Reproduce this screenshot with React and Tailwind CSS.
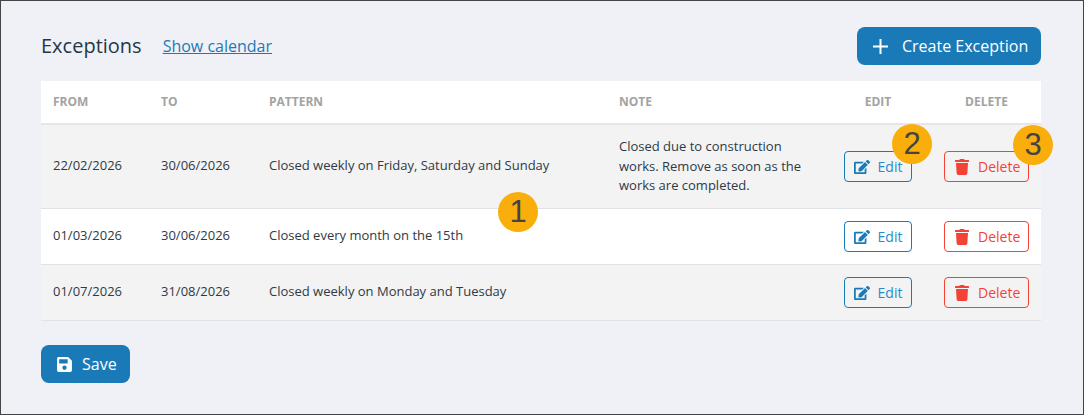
import React from 'react';
import { FaEdit, FaTrash, FaSave } from 'react-icons/fa';

const rows = [
  { from: '22/02/2026', to: '30/06/2026', pattern: 'Closed weekly on Friday, Saturday and Sunday', note: 'Closed due to construction works. Remove as soon as the works are completed.', height: 'h-[84px]', bg: 'bg-[#f3f3f4]' },
  { from: '01/03/2026', to: '30/06/2026', pattern: 'Closed every month on the 15th', note: '', height: 'h-[56px]', bg: 'bg-white' },
  { from: '01/07/2026', to: '31/08/2026', pattern: 'Closed weekly on Monday and Tuesday', note: '', height: 'h-[56px]', bg: 'bg-[#f3f3f4]' },
];

const cell = 'px-3 border-b border-[#e1e2e6] align-middle';
const textCell = `${cell} pb-[2px]`;
const head = 'px-3 text-xs font-bold uppercase text-[#a3a3a3] border-b-2 border-[#e6e6e8]';

const Badge = ({ n, className }) => (
  <div className={`absolute w-10 h-10 rounded-full bg-[#f9ae0b] flex items-center justify-center text-[#444444] text-[31px] font-['Liberation_Sans',sans-serif] ${className}`}>
    {n}
  </div>
);

const App = () => {
  return (
    <div className="relative w-[1084px] h-[415px] border border-[#444444] bg-[#f0f1f6] pl-10 pr-[42px] pt-[26px] font-['Open_Sans',sans-serif] text-[#2d3a45]">
      <div className="flex items-center justify-between h-[38px]">
        <div className="flex items-center gap-[21px]">
          <h1 className="text-xl text-[#263644]">Exceptions</h1>
          <a className="text-base text-[#1a7ab8] underline">Show calendar</a>
        </div>
        <button className="flex items-center pl-4 gap-[14px] w-[184px] h-[38px] rounded-lg bg-[#1a7ab8] text-white text-base">
          <svg viewBox="0 0 15 15" className="w-[15px] h-[15px]" fill="currentColor">
            <path d="M6.5 0h2v6.5H15v2H8.5V15h-2V8.5H0v-2h6.5z" />
          </svg>
          Create Exception
        </button>
      </div>

      <table className="mt-4 w-[1000px] table-fixed border-separate border-spacing-0 text-[13px]">
        <colgroup>
          <col className="w-[108px]" />
          <col className="w-[108px]" />
          <col className="w-[350px]" />
          <col className="w-[225px]" />
          <col className="w-[100px]" />
          <col className="w-[109px]" />
        </colgroup>
        <thead>
          <tr className="h-[44px] bg-white text-left">
            <th className={head}>From</th>
            <th className={head}>To</th>
            <th className={head}>Pattern</th>
            <th className={head}>Note</th>
            <th className={`${head} text-center !pr-5`}>Edit</th>
            <th className={`${head} text-center`}>Delete</th>
          </tr>
        </thead>
        <tbody>
          {rows.map((row) => (
            <tr key={row.from} className={`${row.height} ${row.bg}`}>
              <td className={textCell}>{row.from}</td>
              <td className={textCell}>{row.to}</td>
              <td className={textCell}>{row.pattern}</td>
              <td className={`${cell} leading-[19.5px]`}>{row.note}</td>
              <td className={`${cell} !pr-5`}>
                <button className="flex items-center justify-center gap-2 w-[68px] h-[31px] rounded border border-[#1a7ab8] text-[#2a8ac6] text-sm">
                  <FaEdit className="w-4 h-4 text-[#1a7ab8]" />
                  Edit
                </button>
              </td>
              <td className={cell}>
                <button className="flex items-center pl-[10px] gap-[9px] w-[85px] h-[31px] rounded border border-[#f44336] text-[#f44336] text-sm">
                  <FaTrash className="w-[14px] h-4" />
                  Delete
                </button>
              </td>
            </tr>
          ))}
        </tbody>
      </table>

      <button className="mt-6 flex items-center pl-4 gap-[10px] w-[89px] h-[38px] rounded-lg bg-[#1a7ab8] text-white text-base">
        <FaSave className="w-[15px] h-[17px]" />
        Save
      </button>

      <Badge n="1" className="left-[497px] top-[191px]" />
      <Badge n="2" className="left-[891px] top-[123px]" />
      <Badge n="3" className="left-[1012px] top-[124px]" />
    </div>
  );
};

export default App;
